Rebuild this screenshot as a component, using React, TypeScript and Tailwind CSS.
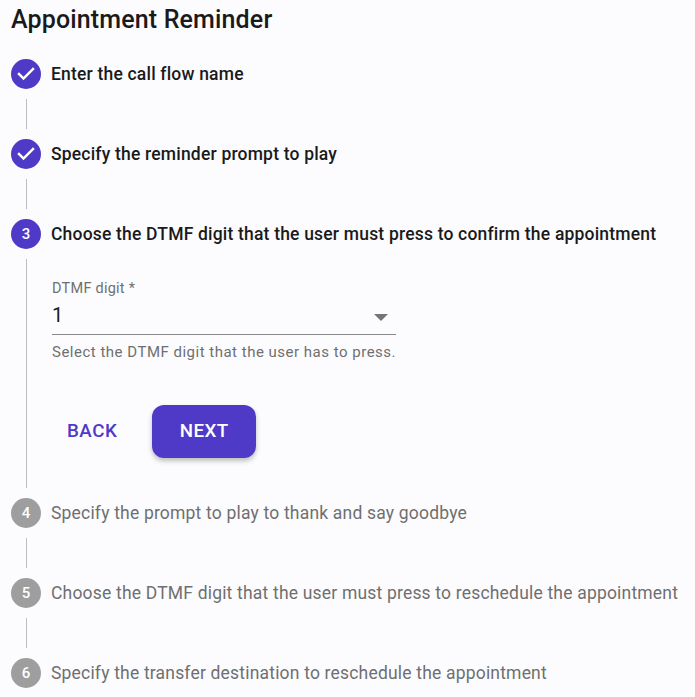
const font = { fontFamily: "Roboto, sans-serif" };

function StepIcon({ n, state }: { n: number; state: "done" | "active" | "todo" }) {
  if (state === "done") {
    return (
      <svg viewBox="0 0 24 24" className="h-[30px] w-[30px] shrink-0 fill-[#4f39c7]">
        <path d="M12 0a12 12 0 1 0 0 24 12 12 0 0 0 0-24zm-2 17l-5-5 1.4-1.4 3.6 3.6 7.6-7.6L19 8l-9 9z" />
      </svg>
    );
  }
  return (
    <div
      className={
        "flex h-[30px] w-[30px] shrink-0 items-center justify-center rounded-full text-[15px] font-medium text-white " +
        (state === "todo" ? "bg-[#9e9e9e]" : "bg-[#4f39c7]")
      }
    >
      {n}
    </div>
  );
}

function Step({ n, state, label }: { n: number; state: "done" | "active" | "todo"; label: string }) {
  return (
    <div className="flex h-[30px] items-center gap-[10px]">
      <StepIcon n={n} state={state} />
      <span
        className={
          "whitespace-nowrap text-[17.5px] tracking-[0.19px] " +
          (state === "todo" ? "text-[#6f6f6f]" : "font-medium text-[#1a1a1a]")
        }
      >
        {label}
      </span>
    </div>
  );
}

function Connector() {
  return <div className="my-[10px] ml-[15px] h-[30px] border-l border-[#bdbdbd]" />;
}

export default function App() {
  return (
    <div className="h-[697px] overflow-hidden bg-[#fcfcff] pl-[11px]" style={font}>
      <h1 className="h-[59px] pt-[4px] text-[25px] leading-[32px] font-medium tracking-[0.15px] text-[#1a1a1a]">
        Appointment Reminder
      </h1>

      <Step n={1} state="done" label="Enter the call flow name" />
      <Connector />
      <Step n={2} state="done" label="Specify the reminder prompt to play" />
      <Connector />
      <Step n={3} state="active" label="Choose the DTMF digit that the user must press to confirm the appointment" />

      <div className="my-[10px] ml-[15px] h-[229px] border-l border-[#bdbdbd] pl-[25px]">
        <div className="w-[344px] pt-[21px]">
          <div className="text-[14.5px] leading-[17px] tracking-[0.25px] text-[#6f6f6f]">DTMF digit *</div>
          <div className="flex h-[38px] items-center justify-between border-b border-[#8a8a8a] pr-[8px] text-[20px] text-[#1a1a1a]">
            <span className="-mt-[2px]">1</span>
            <span className="mt-[4px] h-0 w-0 border-x-[7px] border-t-[7px] border-x-transparent border-t-[#757575]" />
          </div>
          <p className="mt-[8px] whitespace-nowrap text-[15px] leading-[18px] tracking-[0.5px] text-[#6f6f6f]">
            Select the DTMF digit that the user has to press.
          </p>
        </div>
        <div className="mt-[44px] flex items-center gap-[35px] pl-[15px]">
          <button type="button" className="text-[18.75px] font-medium tracking-[0.5px] text-[#4f39c7]">
            BACK
          </button>
          <button
            type="button"
            className="h-[53px] w-[104px] rounded-[12px] bg-[#4f39c7] text-[18.75px] font-medium tracking-[0.5px] text-white shadow-[0_3px_5px_rgba(0,0,0,0.25)]"
          >
            NEXT
          </button>
        </div>
      </div>

      <Step n={4} state="todo" label="Specify the prompt to play to thank and say goodbye" />
      <Connector />
      <Step n={5} state="todo" label="Choose the DTMF digit that the user must press to reschedule the appointment" />
      <Connector />
      <Step n={6} state="todo" label="Specify the transfer destination to reschedule the appointment" />
    </div>
  );
}
